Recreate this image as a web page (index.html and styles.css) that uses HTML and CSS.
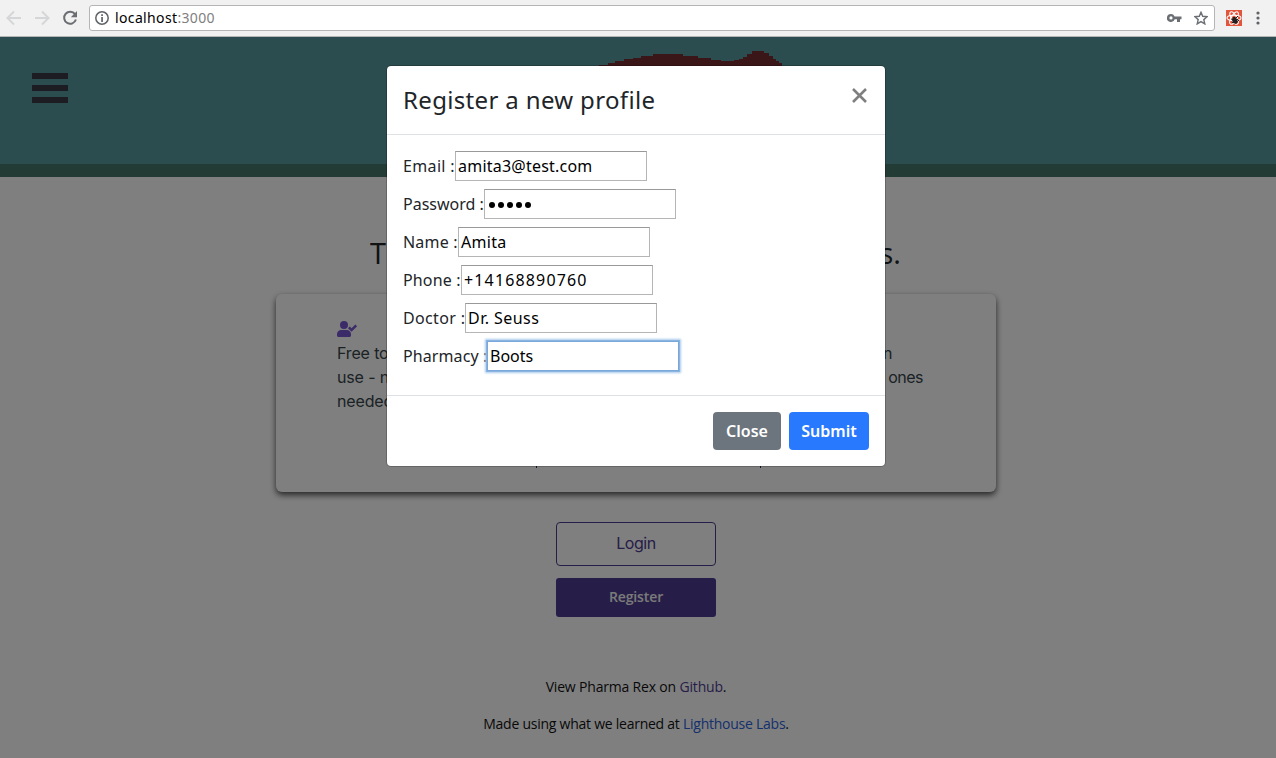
FILE: index.html
```html
<!DOCTYPE html>
<html lang="en">
<head>
<meta charset="utf-8">
<title>Pharma Rex</title>
<link rel="stylesheet" href="styles.css">
</head>
<body>
<div class="browser-bar">
  <svg class="nav-icons" width="89" height="36" viewBox="0 0 89 36" fill="none" stroke-width="2">
    <path d="M21 18H8M14 11.5L7.5 18L14 24.5" stroke="#d5d6d7"/>
    <path d="M35 18H48M42 11.5L48.500 18L42 24.500" stroke="#d5d6d7"/>
    <path d="M75 14.200A6 6 0 1 0 75.900 19.500" stroke="#6b6e73"/>
    <path d="M77 11V17.200H70.800Z" fill="#6b6e73"/>
  </svg>
  <div class="address">
    <svg width="14" height="14" viewBox="0 0 14 14"><circle cx="7" cy="7" r="6.200" fill="none" stroke="#5f6368" stroke-width="1.500"/><path d="M6.200 3.300h1.700v1.700H6.200zM6.200 6h1.700v5H6.200z" fill="#5f6368"/></svg>
    <span class="url">localhost<span class="port">:3000</span></span>
    <svg class="key" width="15" height="10" viewBox="0 0 15 10"><path fill-rule="evenodd" d="M4 1a4 4 0 1 0 3.700 5.200H10V9h3V6.200h1.500V3.400H7.600A4 4 0 0 0 4 1zM4 3.300a1.600 1.600 0 1 1 0 3.200a1.600 1.600 0 0 1 0-3.200z" fill="#6b6e73"/></svg>
    <svg class="star" width="14" height="14" viewBox="0 0 14 14"><path d="M7 1.300l1.700 4 4.400.4-3.300 2.900 1 4.300L7 10.600l-3.800 2.300 1-4.300L.9 5.700l4.400-.4z" fill="none" stroke="#6b6e73" stroke-width="1.400"/></svg>
  </div>
  <svg class="ext" width="16" height="16" viewBox="0 0 16 16"><path fill="#e2543c" d="M0 0h16v16H0z"/><g fill="none" stroke="#fff" stroke-width="1.100"><ellipse cx="8" cy="8" rx="7" ry="2.700"/><ellipse cx="8" cy="8" rx="7" ry="2.700" transform="rotate(60 8 8)"/><ellipse cx="8" cy="8" rx="7" ry="2.700" transform="rotate(120 8 8)"/></g><path d="M7 7l2 0 2 2 1 3-2 2-3-1-1-3z" fill="#252020"/><path d="M5 9l3 1M6 13l2-2M10 8l2-2M11 9l2 2" stroke="#252020"/></svg>
  <svg class="more" width="4" height="16" viewBox="0 0 4 16" fill="#5f6368"><circle cx="2" cy="3" r="1.600"/><circle cx="2" cy="8" r="1.600"/><circle cx="2" cy="13" r="1.600"/></svg>
</div>
<main class="page">
  <header class="banner">
    <div class="menu"><i></i><i></i><i></i></div>
    <svg class="rex" width="188" height="18" viewBox="0 0 188 18" shape-rendering="crispEdges"><path d="M1 18V15H10V13H17V11H26V9H35V8H43V6H55V4H85V6H100V8H113V10H123V11H136V10H141V9H145V7H149V4H154V1H166V3H171V6H175V9H178V11H181V13H184V18Z" fill="#742c30"/></svg>
  </header>
  <h1 class="headline"><span>T</span><span>s.</span></h1>
  <section class="card">
    <div class="feature">
      <svg width="20" height="16" viewBox="0 0 640 512" fill="#7656d2"><path d="M224 256a128 128 0 1 0 0-256a128 128 0 0 0 0 256zm90 32H134C60 288 0 348 0 422v42c0 27 21 48 48 48h352c27 0 48-21 48-48v-42c0-74-60-134-134-134zM636 160l-40-42c-5-5-13-5-18 0L466 229l-48-49c-5-5-13-5-18 0l-42 42c-5 5-5 13 0 18l98 99c5 5 13 5 18 0L636 178c5-5 5-13 0-18z"/></svg>
      <p>Free to<br>use - no<br>needed</p>
    </div>
    <div class="ticks"><i></i><i></i></div>
    <p class="feature-end"><span>n</span><br>ones</p>
  </section>
  <div class="actions"><a class="login">Login</a><a class="register">Register</a></div>
  <footer class="footer">
    <p class="credit-a">View Pharma Rex on <a class="github">Github</a>.</p>
    <p class="credit-b">Made using what we learned at <a class="labs">Lighthouse Labs</a>.</p>
  </footer>
  <div class="overlay">
    <form class="modal">
      <div class="modal-head"><h2>Register a new profile</h2>
        <svg width="15" height="15" viewBox="0 0 15 15"><path d="M1 1L14 14M14 1L1 14" stroke="#7f7f7f" stroke-width="2.600"/></svg>
      </div>
      <div class="modal-body">
        <div class="row"><label class="l-email">Email :</label><div class="field v-email">amita3@test.com</div></div>
        <div class="row"><label class="l-password">Password :</label><div class="field dots"><i></i><i></i><i></i><i></i><i></i></div></div>
        <div class="row"><label class="l-name">Name :</label><div class="field v-name">Amita</div></div>
        <div class="row"><label class="l-phone">Phone :</label><div class="field v-phone">+14168890760</div></div>
        <div class="row"><label class="l-doctor">Doctor :</label><div class="field v-doctor">Dr. Seuss</div></div>
        <div class="row"><label class="l-pharmacy">Pharmacy :</label><div class="field focused">Boots</div></div>
      </div>
      <div class="modal-foot"><span class="btn close">Close</span><span class="btn submit">Submit</span></div>
    </form>
  </div>
</main>
</body>
</html>
```
FILE: styles.css
```css
* { box-sizing: border-box; }
body { margin: 0; width: 1276px; height: 758px; overflow: hidden; font-family: "Noto Sans", sans-serif; }
h1, h2, p { margin: 0; font-weight: 400; }
svg { display: block; flex: none; }
.browser-bar { height: 37px; display: flex; align-items: center; background: #f1f1f1; border-bottom: 1px solid #b5b5b5; }
.address { width: 1126px; height: 26px; padding: 0 6px 0 5px; display: flex; align-items: center; background: #fff; border: 1px solid #b5b5b5; border-radius: 3px; }
.url { flex: 1; margin-left: 6px; font-size: 14px; line-height: 20px; letter-spacing: .36px; }
.port { color: #808080; }
.key { margin-right: 12px; }
.ext { margin: 0 12px 0 11px; }
.more { margin-left: 2px; }
.page { position: relative; height: 721px; background: #fff; }
.banner { height: 140px; display: flex; background: #589a9e; border-bottom: 13px solid #44766a; }
.menu { width: 36px; margin: 36px 0 0 32px; display: flex; flex-direction: column; gap: 6px; }
.menu i { height: 6px; background: #383844; }
.rex { margin: 13px 0 0 530px; }
.headline { width: 531px; height: 117px; padding-top: 58px; margin-left: 370px; display: flex; justify-content: space-between; font: 400 29px/36px "Open Sans", sans-serif; color: #212529; }
.card { width: 720px; height: 198px; margin-left: 276px; padding: 27px 61px; display: flex; background: #fff; border-radius: 6px; box-shadow: 0 3px 6px rgba(0,0,0,.7); font: 16px/24px Inter, sans-serif; letter-spacing: -.15px; color: #35454a; }
.feature { width: 199px; }
.feature p { margin-top: 4px; white-space: nowrap; }
.ticks { width: 225px; margin-top: 145px; height: 2px; display: flex; justify-content: space-between; }
.ticks i { width: 1px; background: #282850; }
.feature-end { flex: 1; padding-top: 20px; text-align: right; margin-right: 12px; letter-spacing: -.5px; }
.feature-end span { margin-right: 31px; }
.actions { margin: 30px 0 0 556px; width: 160px; display: flex; flex-direction: column; gap: 12px; font-family: Inter, sans-serif; text-align: center; }
.login { height: 44px; border: 1px solid #4c3c90; border-radius: 4px; color: #4c3c90; font-size: 16px; line-height: 41px; letter-spacing: -.45px; }
.register { height: 39px; border-radius: 3px; background: #4c3c90; color: #f5f5f5; font: 600 14px/38px "Open Sans", sans-serif; letter-spacing: -.12px; }
.footer { padding-top: 59px; text-align: center; margin-right: 4px; font: 14px/22px "Open Sans", sans-serif; color: #111; }
.footer p + p { margin-top: 15px; }
.credit-a { letter-spacing: -.18px; }
.credit-b { letter-spacing: -.25px; }
.github { color: #4c3c90; }
.labs { color: #2b62d9; }
.overlay { position: absolute; inset: 0; background: rgba(0,0,0,.5); }
.modal { width: 500px; height: 402px; margin: 28px 0 0 386px; border: 1px solid rgba(0,0,0,.2); border-radius: 5px; background: #fff; background-clip: padding-box; color: #212529; }
.modal-head { height: 69px; padding: 16px 18px 0 16px; display: flex; justify-content: space-between; border-bottom: 1px solid #dee2e6; }
.modal-head h2 { font-size: 24px; line-height: 36px; letter-spacing: .34px; }
.modal-head svg { margin-top: 6px; }
.modal-body { height: 260px; padding: 16px; display: flex; flex-direction: column; gap: 8px; }
.row { display: flex; height: 30px; font-size: 16px; line-height: 30px; white-space: nowrap; }
.l-email { width: 52px; letter-spacing: .35px; }
.l-password { width: 81px; }
.l-name { width: 55px; letter-spacing: .2px; }
.l-phone { width: 58px; letter-spacing: .15px; }
.l-doctor { width: 62px; letter-spacing: .35px; }
.l-pharmacy { width: 84px; letter-spacing: .1px; }
.field { width: 192px; padding-left: 2px; border: 1px solid #b5b5b5; border-top-color: #999; background: #fff; line-height: 28px; color: #000; }
.v-email { letter-spacing: .22px; }
.v-name { letter-spacing: .3px; }
.v-phone { letter-spacing: 1.15px; }
.v-doctor { letter-spacing: .45px; }
.dots { display: flex; align-items: center; gap: 3px; padding: 2px 0 0 4px; }
.dots i { width: 6px; height: 6px; border-radius: 50%; background: #000; }
.focused { border-color: #79a7d9; box-shadow: 0 0 0 1px #8bb4e0, 0 0 2px 2px #a9cbed; }
.modal-foot { height: 71px; border-top: 1px solid #dee2e6; padding: 16px; display: flex; justify-content: flex-end; gap: 8px; }
.btn { height: 38px; border-radius: 4px; color: #fff; font-size: 16px; font-weight: 600; line-height: 38px; text-align: center; }
.close { width: 68px; background: #6c757d; }
.submit { width: 80px; background: #2979ff; }
```
